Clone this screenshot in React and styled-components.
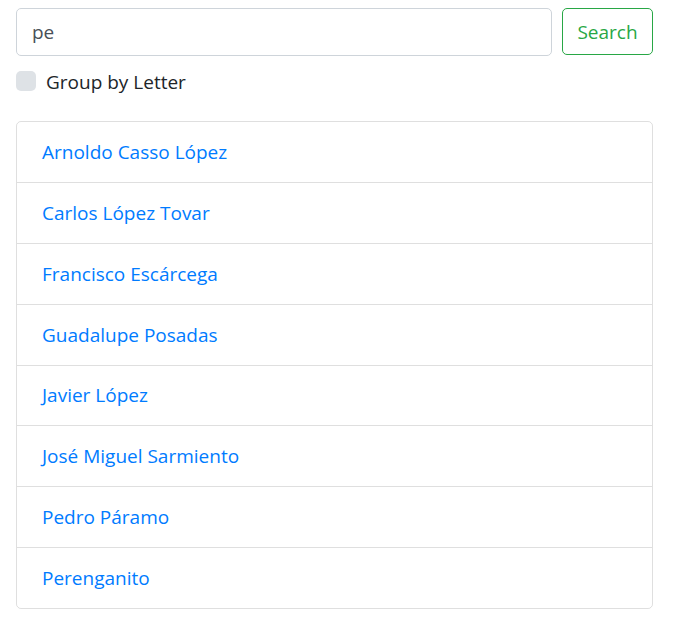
import React from "react";
import styled, { createGlobalStyle } from "styled-components";

const Global = createGlobalStyle`
  html { font-size: 20px; }
  body {
    margin: 0;
    background: #fff;
    font-family: "Open Sans", "Noto Sans", sans-serif;
    font-size: 19px;
    line-height: 30px;
    color: #212529;
  }
  * { box-sizing: border-box; }
`;

const Page = styled.div`
  padding: 8px 23px 0 16px;
`;

const SearchRow = styled.form`
  display: flex;
  gap: 10px;
  align-items: flex-start;
`;

const Input = styled.input`
  flex: 1;
  height: 48px;
  padding: 7.5px 15px;
  font: inherit;
  color: #495057;
  border: 1px solid #ced4da;
  border-radius: 5px;
  outline: none;
`;

const Button = styled.button`
  height: 47px;
  width: 91px;
  padding: 0 12px;
  font: inherit;
  color: #28a745;
  background: #fff;
  border: 1px solid #28a745;
  border-radius: 5px;
`;

const CheckRow = styled.label`
  display: flex;
  align-items: flex-start;
  gap: 10px;
  margin-top: 11px;
  height: 30px;
`;

const Box = styled.span`
  width: 20px;
  height: 20px;
  margin-top: 4px;
  border-radius: 5px;
  background: #dee2e6;
`;

const List = styled.ul`
  list-style: none;
  margin: 24px 0 0;
  padding: 0;
  border: 1px solid rgba(0, 0, 0, 0.125);
  border-radius: 5px;
`;

const Item = styled.li`
  padding: 14.9375px 25px;
  line-height: 30px;
  border-top: ${(p) => (p.$first ? "none" : "1px solid rgba(0,0,0,0.125)")};
`;

const Link = styled.a`
  color: #007bff;
  text-decoration: none;
`;

const names = [
  "Arnoldo Casso López",
  "Carlos López Tovar",
  "Francisco Escárcega",
  "Guadalupe Posadas",
  "Javier López",
  "José Miguel Sarmiento",
  "Pedro Páramo",
  "Perenganito",
];

export default function App() {
  return (
    <Page>
      <Global />
      <SearchRow onSubmit={(e) => e.preventDefault()}>
        <Input defaultValue="pe" />
        <Button type="submit">Search</Button>
      </SearchRow>
      <CheckRow>
        <Box />
        <span>Group by Letter</span>
      </CheckRow>
      <List>
        {names.map((n, i) => (
          <Item key={n} $first={i === 0}>
            <Link href="#">{n}</Link>
          </Item>
        ))}
      </List>
    </Page>
  );
}
